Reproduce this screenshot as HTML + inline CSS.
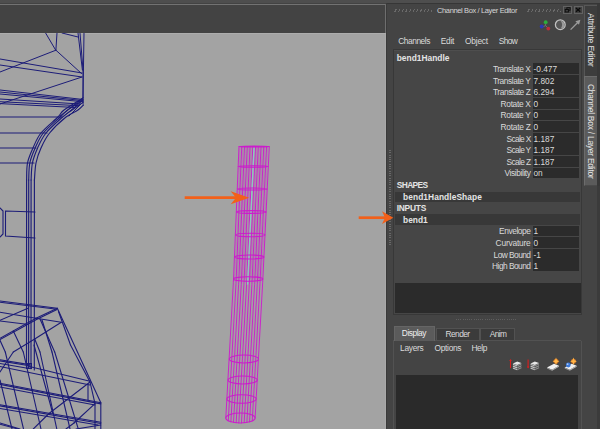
<!DOCTYPE html>
<html><head><meta charset="utf-8"><title>Channel Box / Layer Editor</title>
<style>
html,body{margin:0;padding:0;background:#444;}
body{width:600px;height:429px;position:relative;overflow:hidden;font-family:"Liberation Sans",sans-serif;font-size:8.1px;color:#dadada;}
div{position:absolute;box-sizing:border-box;white-space:nowrap;}
#topbar{left:0;top:0;width:387px;height:33px;background:#434343;}
#topline{left:0;top:4.2px;width:386.5px;height:1.2px;background:#727272;}
#vp{left:0;top:33px;width:386.2px;height:396px;background:#a3a3a3;border-top:1px solid #adadad;border-right:1.4px solid #a9a9a9;}
#vpb{left:384.9px;top:4.2px;width:1.6px;height:28.8px;background:#6e6e6e;}
svg{position:absolute;left:0;top:0;}
.t{line-height:10px;height:10px;}
.fld{left:533px;width:45.8px;height:10.8px;background:#2b2b2b;}
.hl{left:395px;width:185px;height:10.4px;background:#383838;}
</style></head><body>
<div id="topbar"></div><div id="topline"></div>
<div id="vp"></div><div id="vpb"></div>
<svg width="600" height="429" viewBox="0 0 600 429">
<defs><clipPath id="c"><rect x="0" y="33" width="386" height="396"/></clipPath></defs>
<g clip-path="url(#c)" stroke-linecap="round">
<line x1="45.6" y1="33" x2="55.6" y2="50" stroke="#1c1c78" stroke-width="1.0"/>
<line x1="57" y1="33" x2="55.9" y2="50.2" stroke="#1c1c78" stroke-width="1.0"/>
<line x1="55.9" y1="50.2" x2="0" y2="72" stroke="#1c1c78" stroke-width="1.0"/>
<line x1="55.9" y1="50.2" x2="81.5" y2="73.5" stroke="#1c1c78" stroke-width="1.0"/>
<line x1="0" y1="59" x2="82" y2="73" stroke="#1c1c78" stroke-width="1.0"/>
<line x1="0" y1="65" x2="82" y2="77" stroke="#1c1c78" stroke-width="1.0"/>
<line x1="62" y1="33" x2="78" y2="37" stroke="#1c1c78" stroke-width="1.0"/>
<line x1="78" y1="33" x2="82.4" y2="70" stroke="#1c1c78" stroke-width="1.0"/>
<line x1="80" y1="33" x2="83" y2="70" stroke="#1c1c78" stroke-width="1.0"/>
<line x1="84" y1="33" x2="83" y2="98" stroke="#1c1c78" stroke-width="1.0"/>
<line x1="82" y1="77" x2="0" y2="104" stroke="#1c1c78" stroke-width="1.0"/>
<line x1="0" y1="90" x2="83" y2="99.5" stroke="#1c1c78" stroke-width="1.0"/>
<line x1="0" y1="92" x2="83" y2="100.6" stroke="#1c1c78" stroke-width="1.0"/>
<line x1="0" y1="94" x2="83" y2="101.7" stroke="#1c1c78" stroke-width="1.0"/>
<line x1="0" y1="101.7" x2="77.5" y2="105.6" stroke="#1c1c78" stroke-width="1.0"/>
<line x1="0" y1="103.6" x2="75.6" y2="107.5" stroke="#1c1c78" stroke-width="1.0"/>
<line x1="0" y1="99" x2="80" y2="104" stroke="#1c1c78" stroke-width="1.0"/>
<line x1="83" y1="98" x2="60" y2="116" stroke="#1c1c78" stroke-width="1.0"/>
<line x1="82" y1="101" x2="64" y2="116" stroke="#1c1c78" stroke-width="1.0"/>
<line x1="81" y1="104" x2="69" y2="116" stroke="#1c1c78" stroke-width="1.0"/>
<line x1="83" y1="70" x2="83" y2="104" stroke="#1c1c78" stroke-width="1.0"/>
<path d="M83.0 98.0C79.8 100.0 68.2 106.8 64.0 110.0C59.8 113.2 61.8 113.2 58.0 117.0C54.2 120.8 45.2 127.8 41.0 133.0C36.8 138.2 35.2 143.0 33.0 148.0C30.8 153.0 28.6 157.7 27.5 163.0C26.4 168.3 26.8 177.2 26.6 180.0" fill="none" stroke="#1c1c78" stroke-width="1.15"/>
<line x1="26.6" y1="180" x2="26.5" y2="367" stroke="#1c1c78" stroke-width="1.15"/>
<path d="M83.1 99.9C80.6 101.6 71.6 107.1 67.8 110.0C64.0 112.9 64.2 113.2 60.2 117.0C56.1 120.8 47.5 127.8 43.3 133.0C39.2 138.2 37.4 143.0 35.2 148.0C32.9 153.0 30.9 157.7 29.8 163.0C28.7 168.3 28.9 177.2 28.7 180.0" fill="none" stroke="#1c1c78" stroke-width="1.15"/>
<line x1="28.7" y1="180" x2="28.6" y2="367.81" stroke="#1c1c78" stroke-width="1.15"/>
<path d="M83.3 102.1C81.4 103.4 75.6 107.5 72.1 110.0C68.7 112.5 67.0 113.2 62.6 117.0C58.3 120.8 50.2 127.8 46.0 133.0C41.8 138.2 39.9 143.0 37.6 148.0C35.4 153.0 33.5 157.7 32.4 163.0C31.3 168.3 31.3 177.2 31.1 180.0" fill="none" stroke="#1c1c78" stroke-width="1.15"/>
<line x1="31.1" y1="180" x2="31.0" y2="368.74" stroke="#1c1c78" stroke-width="1.15"/>
<path d="M83.5 105.0C82.6 105.8 80.9 108.0 78.0 110.0C75.1 112.0 70.7 113.2 66.0 117.0C61.3 120.8 53.8 127.8 49.6 133.0C45.4 138.2 43.3 143.0 41.0 148.0C38.7 153.0 37.1 157.7 36.0 163.0C34.9 168.3 34.7 177.2 34.4 180.0" fill="none" stroke="#1c1c78" stroke-width="1.15"/>
<line x1="34.4" y1="180" x2="34.3" y2="370" stroke="#1c1c78" stroke-width="1.15"/>
<line x1="0" y1="117" x2="62" y2="117" stroke="#1c1c78" stroke-width="1.1"/>
<line x1="0" y1="133" x2="47" y2="133" stroke="#1c1c78" stroke-width="1.1"/>
<line x1="0" y1="148" x2="36" y2="148" stroke="#1c1c78" stroke-width="1.1"/>
<line x1="0" y1="163" x2="34" y2="163" stroke="#1c1c78" stroke-width="1.1"/>
<polyline points="0,208 3,211 3,234 0,237" fill="none" stroke="#1c1c78" stroke-width="1.1"/>
<polyline points="35,212 5.5,211 5.5,236 35,238" fill="none" stroke="#1c1c78" stroke-width="1.1"/>
<line x1="0" y1="301" x2="57.3" y2="308.3" stroke="#1c1c78" stroke-width="1.1"/>
<line x1="0" y1="302.2" x2="57" y2="309.3" stroke="#1c1c78" stroke-width="1.1"/>
<line x1="57.3" y1="308.3" x2="36" y2="318.3" stroke="#1c1c78" stroke-width="1.1"/>
<line x1="36" y1="318.3" x2="0" y2="338.3" stroke="#1c1c78" stroke-width="1.1"/>
<line x1="56.5" y1="309.8" x2="36.5" y2="319.5" stroke="#1c1c78" stroke-width="1.1"/>
<line x1="36.5" y1="319.5" x2="0" y2="339.6" stroke="#1c1c78" stroke-width="1.1"/>
<line x1="0" y1="312.3" x2="36" y2="318.3" stroke="#1c1c78" stroke-width="1.1"/>
<line x1="36" y1="318.3" x2="61.3" y2="322.3" stroke="#1c1c78" stroke-width="1.1"/>
<line x1="0" y1="320.3" x2="28" y2="308.3" stroke="#1c1c78" stroke-width="1.1"/>
<line x1="0" y1="321" x2="26.7" y2="324.3" stroke="#1c1c78" stroke-width="1.1"/>
<line x1="57.3" y1="308.3" x2="100.8" y2="402.7" stroke="#1c1c78" stroke-width="1.1"/>
<line x1="58.5" y1="311.5" x2="70.5" y2="345" stroke="#1c1c78" stroke-width="1.1"/>
<line x1="70.5" y1="345" x2="90" y2="382" stroke="#1c1c78" stroke-width="1.1"/>
<line x1="90" y1="382" x2="95" y2="403.7" stroke="#1c1c78" stroke-width="1.1"/>
<line x1="100.8" y1="402.7" x2="100.8" y2="429" stroke="#1c1c78" stroke-width="1.1"/>
<line x1="95" y1="403.7" x2="95" y2="429" stroke="#1c1c78" stroke-width="1.1"/>
<line x1="61.3" y1="322.3" x2="34.7" y2="339" stroke="#1c1c78" stroke-width="1.1"/>
<line x1="34.7" y1="339" x2="13.3" y2="352" stroke="#1c1c78" stroke-width="1.1"/>
<line x1="13.3" y1="352" x2="0" y2="372" stroke="#1c1c78" stroke-width="1.1"/>
<line x1="40" y1="319" x2="54.7" y2="352" stroke="#1c1c78" stroke-width="1.1"/>
<line x1="54.7" y1="352" x2="78.3" y2="429" stroke="#1c1c78" stroke-width="1.1"/>
<line x1="42" y1="320" x2="52" y2="352" stroke="#1c1c78" stroke-width="1.1"/>
<line x1="52" y1="352" x2="70" y2="429" stroke="#1c1c78" stroke-width="1.1"/>
<line x1="13.3" y1="331" x2="23.3" y2="352" stroke="#1c1c78" stroke-width="1.1"/>
<line x1="23.3" y1="352" x2="41" y2="429" stroke="#1c1c78" stroke-width="1.1"/>
<line x1="0" y1="340.3" x2="5.3" y2="352" stroke="#1c1c78" stroke-width="1.1"/>
<line x1="5.3" y1="352" x2="23.5" y2="429" stroke="#1c1c78" stroke-width="1.1"/>
<line x1="34.7" y1="339" x2="40" y2="352" stroke="#1c1c78" stroke-width="1.1"/>
<line x1="40" y1="352" x2="56.8" y2="429" stroke="#1c1c78" stroke-width="1.1"/>
<line x1="34" y1="345" x2="52.8" y2="413.5" stroke="#1c1c78" stroke-width="1.1"/>
<line x1="0" y1="359.7" x2="29.4" y2="364.6" stroke="#1c1c78" stroke-width="1.1"/>
<line x1="0" y1="360.9" x2="29.4" y2="365.8" stroke="#1c1c78" stroke-width="1.1"/>
<line x1="29.4" y1="366.5" x2="90" y2="381.2" stroke="#1c1c78" stroke-width="1.1"/>
<line x1="0" y1="366.5" x2="90" y2="385" stroke="#1c1c78" stroke-width="1.1"/>
<line x1="0" y1="363.5" x2="29" y2="368.5" stroke="#1c1c78" stroke-width="1.1"/>
<line x1="0" y1="383.2" x2="100.8" y2="402.7" stroke="#1c1c78" stroke-width="1.1"/>
<line x1="0" y1="384.4" x2="100.8" y2="403.9" stroke="#1c1c78" stroke-width="1.1"/>
<line x1="0" y1="387" x2="95" y2="405" stroke="#1c1c78" stroke-width="1.1"/>
<line x1="0" y1="404.7" x2="100.8" y2="422.3" stroke="#1c1c78" stroke-width="1.1"/>
<line x1="0" y1="405.9" x2="100.8" y2="423.5" stroke="#1c1c78" stroke-width="1.1"/>
<line x1="0" y1="408.5" x2="98" y2="425" stroke="#1c1c78" stroke-width="1.1"/>
<line x1="0" y1="423" x2="20" y2="429" stroke="#1c1c78" stroke-width="1.1"/>
<line x1="0" y1="424.2" x2="18" y2="429" stroke="#1c1c78" stroke-width="1.1"/>
<line x1="76" y1="429" x2="100.8" y2="425" stroke="#1c1c78" stroke-width="1.1"/>
<line x1="90" y1="382" x2="49" y2="413.5" stroke="#1c1c78" stroke-width="1.1"/>
<line x1="49" y1="413.5" x2="33.3" y2="429" stroke="#1c1c78" stroke-width="1.1"/>
<line x1="95" y1="403.7" x2="74" y2="423" stroke="#1c1c78" stroke-width="1.1"/>
<line x1="74" y1="423" x2="66" y2="429" stroke="#1c1c78" stroke-width="1.1"/>
<line x1="0" y1="380" x2="12" y2="429" stroke="#1c1c78" stroke-width="1.1"/>
<line x1="88" y1="385" x2="88" y2="400" stroke="#1c1c78" stroke-width="1.1"/>
<rect x="26.5" y="363.5" width="5" height="5" fill="#1c1c78" fill-opacity="0.35" stroke="#1c1c78"/>
<path d="M239.00 146.5Q234.40 282.2 225.80 418.0" fill="none" stroke="#cc1ccc" stroke-width="1.0" stroke-opacity="0.95"/>
<path d="M241.75 146.5Q236.96 283.7 228.29 420.9" fill="none" stroke="#cc1ccc" stroke-width="1.0" stroke-opacity="0.95"/>
<path d="M244.51 146.5Q239.56 284.2 230.89 421.9" fill="none" stroke="#cc1ccc" stroke-width="1.0" stroke-opacity="0.95"/>
<path d="M247.26 146.5Q242.16 284.5 233.52 422.5" fill="none" stroke="#cc1ccc" stroke-width="1.0" stroke-opacity="0.95"/>
<path d="M250.02 146.5Q244.77 284.6 236.17 422.8" fill="none" stroke="#cc1ccc" stroke-width="1.0" stroke-opacity="0.95"/>
<path d="M252.77 146.5Q247.39 284.8 238.82 423.0" fill="none" stroke="#cc1ccc" stroke-width="1.0" stroke-opacity="0.95"/>
<path d="M255.53 146.5Q250.00 284.8 241.49 423.0" fill="none" stroke="#cc1ccc" stroke-width="1.0" stroke-opacity="0.95"/>
<path d="M258.28 146.5Q252.62 284.6 244.16 422.8" fill="none" stroke="#cc1ccc" stroke-width="1.0" stroke-opacity="0.95"/>
<path d="M261.04 146.5Q255.25 284.5 246.85 422.5" fill="none" stroke="#cc1ccc" stroke-width="1.0" stroke-opacity="0.95"/>
<path d="M263.79 146.5Q257.88 284.2 249.54 421.9" fill="none" stroke="#cc1ccc" stroke-width="1.0" stroke-opacity="0.95"/>
<path d="M266.55 146.5Q260.52 283.7 252.27 420.9" fill="none" stroke="#cc1ccc" stroke-width="1.0" stroke-opacity="0.95"/>
<path d="M269.30 146.5Q263.20 282.2 255.10 418.0" fill="none" stroke="#cc1ccc" stroke-width="1.0" stroke-opacity="0.95"/>
<line x1="239.96" y1="146.5" x2="238.26" y2="212" stroke="#cc1ccc" stroke-width="0.8" stroke-opacity="0.3"/>
<line x1="238.26" y1="212" x2="234.49" y2="279" stroke="#cc1ccc" stroke-width="0.8" stroke-opacity="0.3"/>
<line x1="242.72" y1="146.5" x2="240.96" y2="212" stroke="#cc1ccc" stroke-width="0.8" stroke-opacity="0.3"/>
<line x1="240.96" y1="212" x2="237.15" y2="279" stroke="#cc1ccc" stroke-width="0.8" stroke-opacity="0.3"/>
<line x1="245.47" y1="146.5" x2="243.66" y2="212" stroke="#cc1ccc" stroke-width="0.8" stroke-opacity="0.3"/>
<line x1="243.66" y1="212" x2="239.82" y2="279" stroke="#cc1ccc" stroke-width="0.8" stroke-opacity="0.3"/>
<line x1="248.23" y1="146.5" x2="246.36" y2="212" stroke="#cc1ccc" stroke-width="0.8" stroke-opacity="0.3"/>
<line x1="246.36" y1="212" x2="242.48" y2="279" stroke="#cc1ccc" stroke-width="0.8" stroke-opacity="0.3"/>
<line x1="250.98" y1="146.5" x2="249.06" y2="212" stroke="#cc1ccc" stroke-width="0.8" stroke-opacity="0.3"/>
<line x1="249.06" y1="212" x2="245.15" y2="279" stroke="#cc1ccc" stroke-width="0.8" stroke-opacity="0.3"/>
<line x1="253.74" y1="146.5" x2="251.77" y2="212" stroke="#cc1ccc" stroke-width="0.8" stroke-opacity="0.3"/>
<line x1="251.77" y1="212" x2="247.81" y2="279" stroke="#cc1ccc" stroke-width="0.8" stroke-opacity="0.3"/>
<line x1="256.49" y1="146.5" x2="254.47" y2="212" stroke="#cc1ccc" stroke-width="0.8" stroke-opacity="0.3"/>
<line x1="254.47" y1="212" x2="250.48" y2="279" stroke="#cc1ccc" stroke-width="0.8" stroke-opacity="0.3"/>
<line x1="259.25" y1="146.5" x2="257.17" y2="212" stroke="#cc1ccc" stroke-width="0.8" stroke-opacity="0.3"/>
<line x1="257.17" y1="212" x2="253.14" y2="279" stroke="#cc1ccc" stroke-width="0.8" stroke-opacity="0.3"/>
<line x1="262.00" y1="146.5" x2="259.87" y2="212" stroke="#cc1ccc" stroke-width="0.8" stroke-opacity="0.3"/>
<line x1="259.87" y1="212" x2="255.81" y2="279" stroke="#cc1ccc" stroke-width="0.8" stroke-opacity="0.3"/>
<line x1="264.75" y1="146.5" x2="262.57" y2="212" stroke="#cc1ccc" stroke-width="0.8" stroke-opacity="0.3"/>
<line x1="262.57" y1="212" x2="258.47" y2="279" stroke="#cc1ccc" stroke-width="0.8" stroke-opacity="0.3"/>
<line x1="267.51" y1="146.5" x2="265.27" y2="212" stroke="#cc1ccc" stroke-width="0.8" stroke-opacity="0.3"/>
<line x1="265.27" y1="212" x2="261.14" y2="279" stroke="#cc1ccc" stroke-width="0.8" stroke-opacity="0.3"/>
<line x1="254.0" y1="148" x2="247.6" y2="284" stroke="#8cd2c2" stroke-width="1.35" stroke-opacity="0.9"/>
<ellipse cx="254.15" cy="146.5" rx="15.15" ry="0.5" fill="none" stroke="#cc1ccc" stroke-width="1.1"/>
<ellipse cx="253.31" cy="166.5" rx="15.06" ry="0.8" fill="none" stroke="#cc1ccc" stroke-width="1.1"/>
<ellipse cx="252.36" cy="189" rx="14.95" ry="1.0" fill="none" stroke="#cc1ccc" stroke-width="1.1"/>
<ellipse cx="251.36" cy="212" rx="14.86" ry="1.4" fill="none" stroke="#cc1ccc" stroke-width="1.1"/>
<ellipse cx="250.32" cy="235" rx="14.77" ry="1.7" fill="none" stroke="#cc1ccc" stroke-width="1.1"/>
<ellipse cx="249.29" cy="257" rx="14.71" ry="2" fill="none" stroke="#cc1ccc" stroke-width="1.1"/>
<ellipse cx="248.21" cy="279" rx="14.66" ry="2.2" fill="none" stroke="#cc1ccc" stroke-width="1.1"/>
<ellipse cx="243.90" cy="359" rx="14.60" ry="4" fill="none" stroke="#cc1ccc" stroke-width="1.1"/>
<ellipse cx="242.69" cy="380" rx="14.61" ry="4" fill="none" stroke="#cc1ccc" stroke-width="1.1"/>
<ellipse cx="241.57" cy="399" rx="14.63" ry="4.2" fill="none" stroke="#cc1ccc" stroke-width="1.1"/>
<ellipse cx="240.45" cy="418" rx="14.65" ry="5" fill="none" stroke="#cc1ccc" stroke-width="1.1"/>
<line x1="184.7" y1="197.7" x2="237" y2="197.7" stroke="#f2601a" stroke-width="2.7" stroke-linecap="butt"/><polygon points="249.3,197.7 230.7,191.2 236,197.7 230.7,204.3" fill="#f2601a"/>
</g>
</svg>

<!-- right panel -->
<div style="left:386.4px;top:0;width:213.6px;height:429px;background:#444;border-left:1.2px solid #3a3a3a"></div>
<div style="left:0;top:0;width:600px;height:2.5px;background:#4e4e4e"></div>
<div style="left:387px;top:2.5px;width:213px;height:1px;background:#363636"></div>
<!-- title bar -->
<div class="t" style="top:6.30px;font-size:7.5px;letter-spacing:-0.370px;left:437.00px;color:#d6d6d6;">Channel Box / Layer Editor</div>
<div id="grip1" style="left:394px;top:8.5px;width:38px;height:3.5px;background:repeating-linear-gradient(115deg,#444 0 1.5px,#6a6a6a 1.5px 2.5px,#444 2.5px 3.3px)"></div>
<div id="grip2" style="left:527px;top:8.5px;width:34px;height:3.5px;background:repeating-linear-gradient(115deg,#444 0 1.5px,#6a6a6a 1.5px 2.5px,#444 2.5px 3.3px)"></div>
<div style="left:563px;top:6px;width:8.5px;height:7.5px;background:#404040;border:0.9px solid #626262"></div>
<div style="left:573.5px;top:6px;width:9px;height:7.5px;background:#404040;border:0.9px solid #626262"></div>
<svg width="600" height="429" viewBox="0 0 600 429">
 <g fill="none" stroke="#0c0c0c" stroke-width="0.9">
  <rect x="566.9" y="7.7" width="3.2" height="2.5"/><rect x="565.2" y="9.5" width="3.2" height="2.5" fill="#404040"/>
  <path d="M576 7.9l4.200 3.800M580.200 7.900l-4.200 3.800" stroke-width="1.4"/>
 </g>
 <!-- icons -->
 <g>
  <path d="M545.6 25.6V21.6M545.6 25.6l-3.6 1.6M545.6 25.6l2.800 2.800" stroke="#7a7a7a" stroke-width="0.8"/>
  <circle cx="545.7" cy="22.2" r="1.9" fill="#2cae3c"/><circle cx="541.7" cy="26.4" r="2" fill="#2c36b4"/><circle cx="548.3" cy="28.6" r="1.9" fill="#bc2c3a"/>
  <circle cx="560.3" cy="24.7" r="4.9" fill="#565656" stroke="#c2c2c2" stroke-width="1.25"/>
  <path d="M560.6 20.900a3.800 3.800 0 0 1 0 7.600a5.500 5.500 0 0 0 0-7.600z" fill="#9a9a9a"/>
  <path d="M570.600 29.600L578 22.200" stroke="#9c9c9c" stroke-width="1.300"/><path d="M580.400 19.800l-5 1.400 3.600 3.600z" fill="#9c9c9c"/>
 </g>
</svg>
<!-- menu -->
<div class="t" style="top:35.70px;font-size:8.4px;letter-spacing:-0.474px;left:398.30px;">Channels</div>
<div class="t" style="top:35.70px;font-size:8.4px;letter-spacing:-0.319px;left:440.80px;">Edit</div>
<div class="t" style="top:35.70px;font-size:8.4px;letter-spacing:-0.213px;left:465.00px;">Object</div>
<div class="t" style="top:35.70px;font-size:8.4px;letter-spacing:-0.628px;left:498.70px;">Show</div>
<!-- channel frame -->
<div style="left:392.6px;top:48.8px;width:189.4px;height:266.5px;border:1.2px solid #383838;background:#464646"></div>
<div style="left:394px;top:50px;width:187px;height:1px;background:#4e4e4e"></div>
<div style="left:394.5px;top:282.5px;width:186px;height:30.5px;background:#2b2b2b"></div>
<div class="t" style="top:52.70px;font-size:8.4px;letter-spacing:0.024px;left:396.70px;font-weight:bold;color:#e4e4e4;">bend1Handle</div>
<div class="fld" style="top:63.25px"></div><div class="t" style="top:64.05px;font-size:8.4px;letter-spacing:-0.449px;left:492.90px;">Translate X</div><div class="t" style="top:64.05px;font-size:8.3px;left:533.50px;">-0.477</div>
<div class="fld" style="top:74.85px"></div><div class="t" style="top:75.65px;font-size:8.4px;letter-spacing:-0.435px;left:492.90px;">Translate Y</div><div class="t" style="top:75.65px;font-size:8.3px;left:533.50px;">7.802</div>
<div class="fld" style="top:86.45px"></div><div class="t" style="top:87.25px;font-size:8.4px;letter-spacing:-0.406px;left:492.90px;">Translate Z</div><div class="t" style="top:87.25px;font-size:8.3px;left:533.50px;">6.294</div>
<div class="fld" style="top:98.05px"></div><div class="t" style="top:98.85px;font-size:8.4px;letter-spacing:-0.335px;left:500.60px;">Rotate X</div><div class="t" style="top:98.85px;font-size:8.3px;left:533.50px;">0</div>
<div class="fld" style="top:109.65px"></div><div class="t" style="top:110.45px;font-size:8.4px;letter-spacing:-0.316px;left:500.60px;">Rotate Y</div><div class="t" style="top:110.45px;font-size:8.3px;left:533.50px;">0</div>
<div class="fld" style="top:121.25px"></div><div class="t" style="top:122.05px;font-size:8.4px;letter-spacing:-0.276px;left:500.60px;">Rotate Z</div><div class="t" style="top:122.05px;font-size:8.3px;left:533.50px;">0</div>
<div class="fld" style="top:132.85px"></div><div class="t" style="top:133.65px;font-size:8.4px;letter-spacing:-0.707px;left:506.60px;">Scale X</div><div class="t" style="top:133.65px;font-size:8.3px;left:533.50px;">1.187</div>
<div class="fld" style="top:144.45px"></div><div class="t" style="top:145.25px;font-size:8.4px;letter-spacing:-0.685px;left:506.60px;">Scale Y</div><div class="t" style="top:145.25px;font-size:8.3px;left:533.50px;">1.187</div>
<div class="fld" style="top:156.05px"></div><div class="t" style="top:156.85px;font-size:8.4px;letter-spacing:-0.639px;left:506.60px;">Scale Z</div><div class="t" style="top:156.85px;font-size:8.3px;left:533.50px;">1.187</div>
<div class="fld" style="top:167.65px"></div><div class="t" style="top:168.45px;font-size:8.4px;letter-spacing:-0.419px;left:504.60px;">Visibility</div><div class="t" style="top:168.45px;font-size:8.3px;left:533.50px;">on</div>
<div class="t" style="top:180.40px;font-size:8.4px;letter-spacing:-0.591px;left:396.70px;font-weight:bold;color:#e4e4e4;">SHAPES</div>
<div class="hl" style="top:191.6px"></div>
<div class="t" style="top:192.20px;font-size:8.4px;letter-spacing:0.066px;left:403.10px;font-weight:bold;color:#e4e4e4;">bend1HandleShape</div>
<div class="t" style="top:202.90px;font-size:8.4px;letter-spacing:-0.234px;left:396.70px;font-weight:bold;color:#e4e4e4;">INPUTS</div>
<div class="hl" style="top:214.4px"></div>
<div class="t" style="top:214.60px;font-size:8.4px;letter-spacing:-0.007px;left:403.10px;font-weight:bold;color:#e4e4e4;">bend1</div>
<div class="fld" style="top:225.55px"></div><div class="t" style="top:226.35px;font-size:8.4px;letter-spacing:-0.441px;left:499.10px;">Envelope</div><div class="t" style="top:226.35px;font-size:8.3px;left:533.50px;">1</div>
<div class="fld" style="top:237.15px"></div><div class="t" style="top:237.95px;font-size:8.4px;letter-spacing:-0.209px;left:495.60px;">Curvature</div><div class="t" style="top:237.95px;font-size:8.3px;left:533.50px;">0</div>
<div class="fld" style="top:248.75px"></div><div class="t" style="top:249.55px;font-size:8.4px;letter-spacing:-0.559px;left:493.60px;">Low Bound</div><div class="t" style="top:249.55px;font-size:8.3px;left:533.50px;">-1</div>
<div class="fld" style="top:260.35px"></div><div class="t" style="top:261.15px;font-size:8.4px;letter-spacing:-0.540px;left:492.10px;">High Bound</div><div class="t" style="top:261.15px;font-size:8.3px;left:533.50px;">1</div>
<!-- splitter dots -->
<div style="left:388.8px;top:150px;width:2.5px;height:95px;background:repeating-linear-gradient(180deg,#686868 0 1px,#444 1px 2.3px)"></div>
<div style="left:456.3px;top:318.6px;width:60px;height:1.6px;background:repeating-linear-gradient(90deg,#5e5e5e 0 1px,#444 1px 2.2px)"></div>
<!-- layer editor -->
<div style="left:393.3px;top:339.7px;width:189px;height:90px;border:1px solid #525252;border-right:1px solid #383838;background:#444"></div><div style="left:580.6px;top:340.7px;width:0.8px;height:89px;background:#525252"></div>
<div style="left:393.7px;top:325.9px;width:41.6px;height:15px;background:#5b5b5b;border:1px solid #656565;border-bottom:none"></div>
<div style="left:436.2px;top:328.2px;width:43.6px;height:12px;background:#3b3b3b;border:1px solid #525252;border-bottom:none"></div>
<div style="left:479.8px;top:328.2px;width:35.600px;height:12px;background:#3b3b3b;border:1px solid #525252;border-bottom:none"></div>
<div class="t" style="top:328.40px;font-size:8.4px;letter-spacing:-0.463px;left:401.80px;color:#eee;">Display</div>
<div class="t" style="top:329.00px;font-size:8.4px;letter-spacing:-0.541px;left:445.40px;">Render</div>
<div class="t" style="top:329.00px;font-size:8.4px;letter-spacing:-0.584px;left:489.70px;">Anim</div>
<div class="t" style="top:343.20px;font-size:8.4px;letter-spacing:-0.285px;left:400.10px;">Layers</div>
<div class="t" style="top:343.20px;font-size:8.4px;letter-spacing:-0.307px;left:434.50px;">Options</div>
<div class="t" style="top:343.20px;font-size:8.4px;letter-spacing:-0.444px;left:471.40px;">Help</div>
<div style="left:395.9px;top:374.6px;width:182.1px;height:56px;background:#2a2a2a"></div>
<svg width="600" height="429" viewBox="0 0 600 429" id="lic"><g transform="translate(0,0.4)">
 <g id="i1"><path d="M512.6 363.0L517.2 360.8L521.8000000000001 362.40000000000003V367.40000000000003L517.2 369.40000000000003L512.6 367.6z" fill="#363636"/><path d="M512.9 363.3L517.2 364.8v1.3L512.9 364.6z" fill="#c4c4c4"/><path d="M517.2 364.8L521.5 362.8v1.3L517.2 366.1z" fill="#8e8e8e"/><path d="M512.9 365.2L517.2 366.7v1.3L512.9 366.5z" fill="#c4c4c4"/><path d="M517.2 366.7L521.5 364.7v1.3L517.2 368.0z" fill="#8e8e8e"/><path d="M512.9 367.1L517.2 368.6v1.3L512.9 368.4z" fill="#c4c4c4"/><path d="M517.2 368.6L521.5 366.6v1.3L517.2 369.9z" fill="#8e8e8e"/><path d="M512.9 363.1L517.2 361.1L521.5 362.5L517.2 364.6z" fill="#e6e6e6"/><path d="M510.5 359.8v8" stroke="#d81e1e" stroke-width="1.100"/><path d="M509.2 360.6h2.600l-1.300-2z" fill="#d81e1e"/></g>
 <g id="i2"><path d="M530.2 363.0L534.8000000000001 360.8L539.4000000000001 362.40000000000003V367.40000000000003L534.8000000000001 369.40000000000003L530.2 367.6z" fill="#363636"/><path d="M530.5 363.3L534.8000000000001 364.8v1.3L530.5 364.6z" fill="#c4c4c4"/><path d="M534.8000000000001 364.8L539.1 362.8v1.3L534.8000000000001 366.1z" fill="#8e8e8e"/><path d="M530.5 365.2L534.8000000000001 366.7v1.3L530.5 366.5z" fill="#c4c4c4"/><path d="M534.8000000000001 366.7L539.1 364.7v1.3L534.8000000000001 368.0z" fill="#8e8e8e"/><path d="M530.5 367.1L534.8000000000001 368.6v1.3L530.5 368.4z" fill="#c4c4c4"/><path d="M534.8000000000001 368.6L539.1 366.6v1.3L534.8000000000001 369.9z" fill="#8e8e8e"/><path d="M530.5 363.1L534.8000000000001 361.1L539.1 362.5L534.8000000000001 364.6z" fill="#e6e6e6"/><path d="M528.1 359.2v8" stroke="#d81e1e" stroke-width="1.1"/><path d="M526.8000000000001 366.0h2.600l-1.300 2z" fill="#d81e1e"/></g>
 <g id="i3"><path d="M547 367l7-3.600 5 2-7 4z" fill="#f0f0f0"/><path d="M547 367l5 2.400v1l-5-2.400z" fill="#999"/><path d="M552 369.400l7-4v1l-7 4z" fill="#bbb"/>
  <circle cx="556" cy="360.900" r="2.500" fill="#e8761a" fill-opacity="0.85"/><path d="M556 357.200l1 2.700 2.400 1-2.400 1-1 2.700-1-2.700-2.400-1 2.400-1z" fill="#ffb648"/></g>
 <g id="i4"><path d="M564.700 367l7-3.600 5 2-7 4z" fill="#f0f0f0"/><path d="M564.700 367l5 2.400v1l-5-2.400z" fill="#999"/><path d="M569.700 369.400l7-4v1l-7 4z" fill="#bbb"/>
  <circle cx="568.300" cy="364.600" r="2.400" fill="#3b78d8"/><circle cx="567.600" cy="363.800" r="0.900" fill="#a8c8f4"/>
  <circle cx="573.500" cy="360.900" r="2.500" fill="#e8761a" fill-opacity="0.85"/><path d="M573.500 357.200l1 2.700 2.400 1-2.400 1-1 2.700-1-2.700-2.400-1 2.400-1z" fill="#ffb648"/></g></g>
</svg>
<!-- right tabs -->
<div style="left:582.6px;top:3.5px;width:17.4px;height:426px;background:#444"></div>
<div style="left:597.4px;top:3.5px;width:2.6px;height:183px;background:#383838"></div><div style="left:597.2px;top:186px;width:2.8px;height:243px;background:#3b3b3b"></div>
<div style="left:584.2px;top:4.6px;width:13.2px;height:71.4px;background:#3d3d3d;border-left:1px solid #575757;border-top:1px solid #575757"></div>
<div style="left:584.2px;top:76px;width:13.2px;height:109.7px;background:#5b5b5b;border-left:1px solid #6c6c6c;border-top:1px solid #6c6c6c;border-bottom:1px solid #4a4a4a"></div>
<div class="t" style="top:12.80px;font-size:8.5px;letter-spacing:-0.164px;left:596.20px;color:#e4e4e4;transform-origin:0 0;transform:rotate(90deg);">Attribute Editor</div>
<div class="t" style="top:84.40px;font-size:8.5px;letter-spacing:-0.272px;left:596.20px;color:#e4e4e4;transform-origin:0 0;transform:rotate(90deg);">Channel Box / Layer Editor</div>
<!-- arrow 2 over panel edge -->
<svg width="600" height="429" viewBox="0 0 600 429"><g id="arrow2"><line x1="358.7" y1="217.7" x2="386" y2="217.7" stroke="#f2601a" stroke-width="2.7"/><polygon points="393.3,217.7 382,211.3 385,217.7 382,224.100" fill="#f2601a"/></g></svg>
</body></html>
